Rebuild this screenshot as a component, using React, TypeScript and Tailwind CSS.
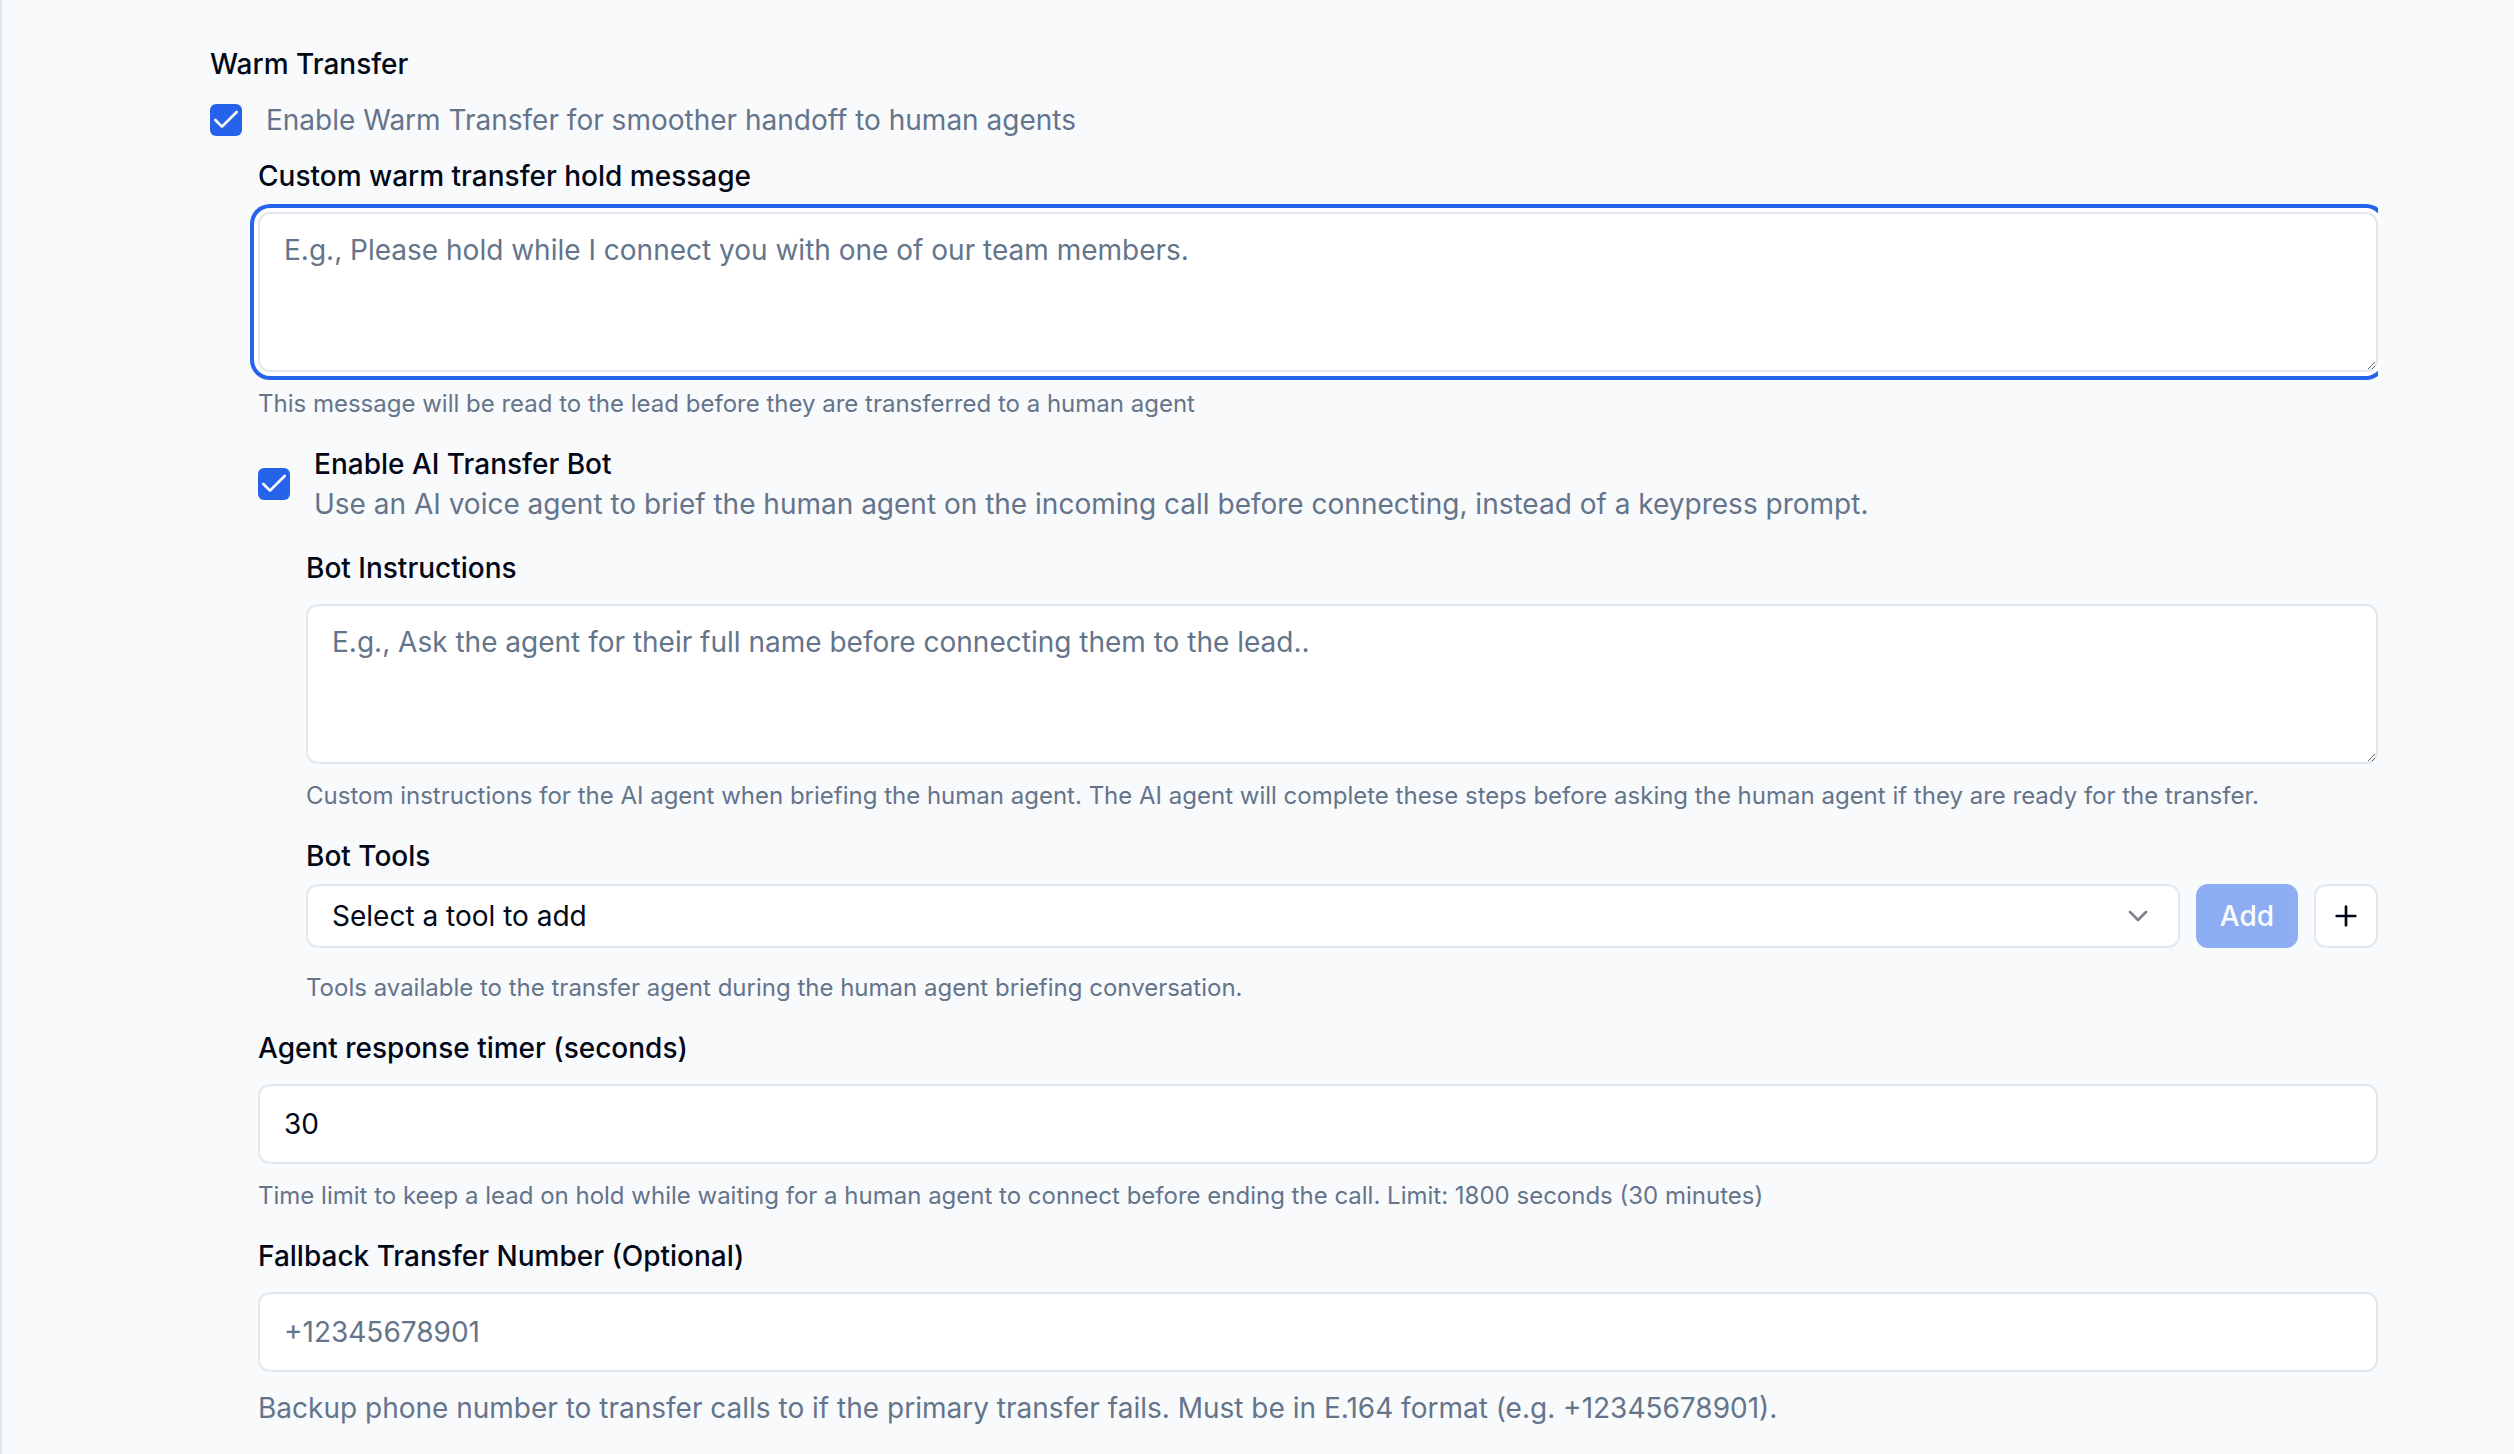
import { Check, ChevronDown, Plus } from "lucide-react";

function Box() {
  return (
    <span className="flex h-4 w-4 shrink-0 items-center justify-center rounded-[3px] bg-[#2563eb] text-white">
      <Check className="h-4 w-4" strokeWidth={2} />
    </span>
  );
}

export default function App() {
  return (
    <div className="[zoom:2]">
      <div className="min-h-[727px] w-full border-l border-slate-200 bg-slate-50 pl-[104px] pr-[68px] pt-[22px] font-['Inter',sans-serif] text-[#020817]">
        <div className="overflow-hidden pb-4">
          <h3 className="text-sm font-medium leading-5">Warm Transfer</h3>
          <div className="mt-2 flex items-center gap-3">
            <Box />
            <span className="text-sm leading-5 text-[#64748b]">
              Enable Warm Transfer for smoother handoff to human agents
            </span>
          </div>

          <div className="pl-6">
            <label className="mt-2 block text-sm font-medium leading-5">
              Custom warm transfer hold message
            </label>
            <textarea
              readOnly
              placeholder="E.g., Please hold while I connect you with one of our team members."
              className="mt-2 block h-20 min-h-[80px] w-full rounded-md border border-slate-200 bg-white px-3 py-2 text-sm leading-5 outline-none ring-2 ring-[#2563eb] ring-offset-2 ring-offset-white placeholder:text-[#64748b]"
            />
            <p className="mt-2 text-xs leading-4 text-[#64748b]">
              This message will be read to the lead before they are transferred to a human agent
            </p>

            <div className="mt-3 flex items-center gap-3">
              <Box />
              <div>
                <div className="text-sm font-medium leading-5">Enable AI Transfer Bot</div>
                <div className="text-sm leading-5 text-[#64748b]">
                  Use an AI voice agent to brief the human agent on the incoming call before connecting, instead of a keypress prompt.
                </div>
              </div>
            </div>

            <div className="pl-6">
              <label className="mt-3 block text-sm font-medium leading-5">Bot Instructions</label>
              <textarea
                readOnly
                placeholder="E.g., Ask the agent for their full name before connecting them to the lead.."
                className="mt-2 block h-20 min-h-[80px] w-full rounded-md border border-slate-200 bg-white px-3 py-2 text-sm leading-5 outline-none placeholder:text-[#64748b]"
              />
              <p className="mt-2 text-xs leading-4 text-[#64748b]">
                Custom instructions for the AI agent when briefing the human agent. The AI agent will complete these steps before asking the human agent if they are ready for the transfer.
              </p>

              <label className="mt-3 block text-sm font-medium leading-5">Bot Tools</label>
              <div className="mt-1 flex items-center gap-2">
                <div className="flex h-8 flex-1 items-center justify-between rounded-md border border-slate-200 bg-white px-3 text-sm">
                  <span>Select a tool to add</span>
                  <ChevronDown className="h-4 w-4 opacity-50" />
                </div>
                <button className="h-8 rounded-md bg-[#2563eb] px-3 text-sm font-medium text-white opacity-50">
                  Add
                </button>
                <button className="flex h-8 w-8 items-center justify-center rounded-md border border-slate-200 bg-white">
                  <Plus className="h-4 w-4" />
                </button>
              </div>
              <p className="mt-3 text-xs leading-4 text-[#64748b]">
                Tools available to the transfer agent during the human agent briefing conversation.
              </p>
            </div>

            <label className="mt-3 block text-sm font-medium leading-5">Agent response timer (seconds)</label>
            <input
              readOnly
              value="30"
              className="mt-2 block h-10 w-full rounded-md border border-slate-200 bg-white px-3 text-sm outline-none"
            />
            <p className="mt-2 text-xs leading-4 text-[#64748b]">
              Time limit to keep a lead on hold while waiting for a human agent to connect before ending the call. Limit: 1800 seconds (30 minutes)
            </p>

            <label className="mt-3 block text-sm font-medium leading-5">Fallback Transfer Number (Optional)</label>
            <input
              readOnly
              placeholder="+12345678901"
              className="mt-2 block h-10 w-full rounded-md border border-slate-200 bg-white px-3 text-sm outline-none placeholder:text-[#64748b]"
            />
            <p className="mt-2 text-sm leading-5 text-[#64748b]">
              Backup phone number to transfer calls to if the primary transfer fails. Must be in E.164 format (e.g. +12345678901).
            </p>
          </div>
        </div>
      </div>
    </div>
  );
}
